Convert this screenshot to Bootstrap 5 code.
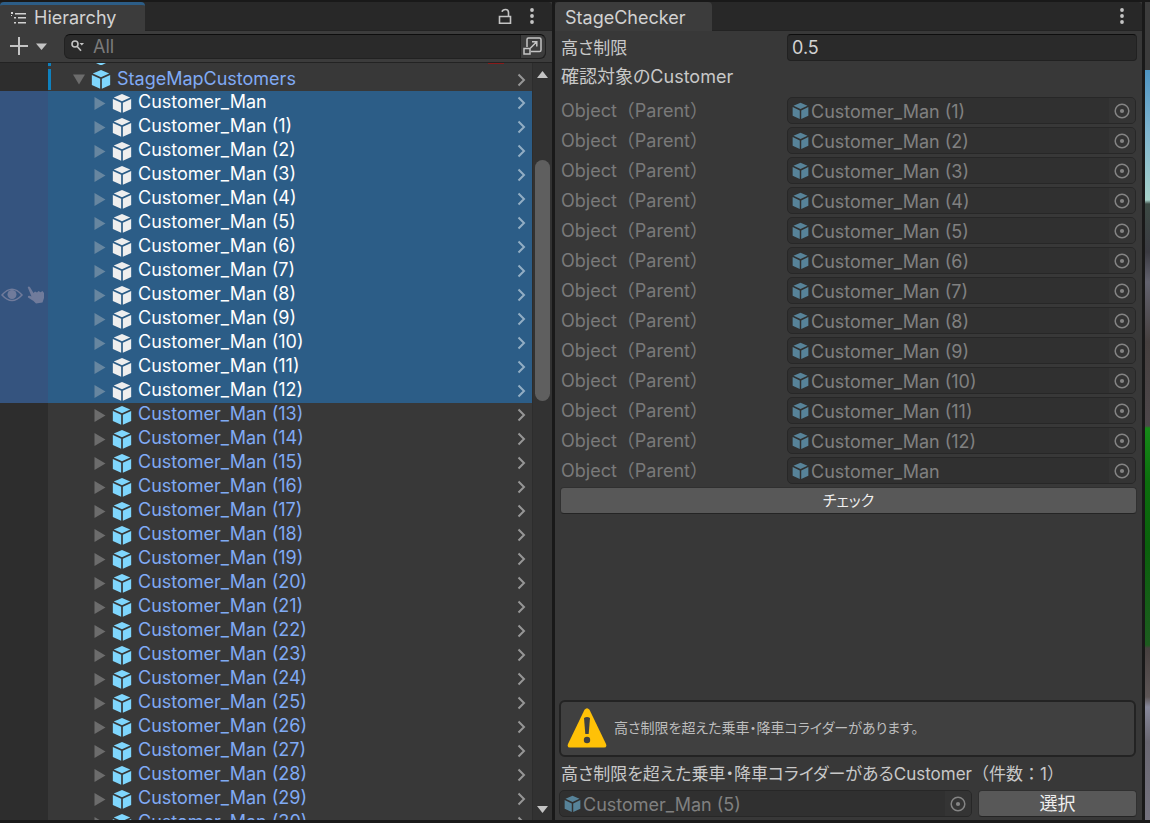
<!DOCTYPE html>
<html lang="ja">
<head>
<meta charset="utf-8">
<meta name="viewport" content="width=device-width, initial-scale=1">
<title>Hierarchy / StageChecker</title>
<link href="https://cdn.jsdelivr.net/npm/bootstrap@5.3.0/dist/css/bootstrap.min.css" rel="stylesheet">
<style>
body { background:#191919; color:#c8c8c8; font-family:Inter,"Noto Sans CJK JP",sans-serif; font-size:18px; line-height:24px; }
svg { display:block; flex:none; }
button { color:inherit; }
.kana { font-feature-settings:"palt"; }
.workspace { height:100vh; padding:2px 0 3px; gap:3px; }
.pane-hierarchy { flex:0 0 48%; min-width:0; background:#383838; }
.pane-checker { min-width:0; background:#383838; }
.tabbar { height:29px; background:#282828; border-bottom:1px solid #232323; color:#c4c4c4; border-radius:0 4px 0 0; }
.pane-tab { background:#3c3c3c; height:29px; line-height:24px; border-radius:4px 4px 0 0; color:#d2d2d2; }
.tab-active { border-top:3px solid #2c5d87; padding:1px 29px 0 11px; gap:7px; }
.tab-plain { padding:4px 27px 0 10px; }
.tabtools { gap:18px; padding-right:18px; }
.bare { background:none; border:0; padding:0; }
.toolbar { height:32px; background:#3c3c3c; border-bottom:1px solid #232323; padding:3px 6px 4px 10px; }
.searchbox { background:#2a2a2a; border:1px solid #212121; border-top-color:#0d0d0d; border-radius:6px; height:25px; margin-left:17px; padding-left:6px; }
.searchbox input { background:none; border:0; outline:0; color:#d2d2d2; padding:1px 0 0 9px; min-width:0; height:23px; }
.searchbox input::placeholder { color:#7b7b7b; opacity:1; }
.pick-scene { background:#3c3c3c; border-left:1px solid #212121; height:23px; width:25px; padding-left:2px; border-radius:0 6px 6px 0; color:#c4c4c4; }
.tree { min-height:0; }
.tree-rows { min-width:0; }
.tree-row { height:24px; color:#80aaf4; flex:none; }
.gutter { width:48px; background:#2d2d2d; padding-left:1px; gap:4px; color:#707b9b; flex:none; }
.row-body { min-width:0; padding:0 6px 0 46px; }
.row-body .twist { color:#6c6c6c; margin-right:6px; }
.row-body .cube { color:#7fd6fd; margin-right:6px; }
.row-body .go { color:#969696; }
.row-text { line-height:22px; height:24px; }
.selected { color:#fff; background:#2c5d87; }
.selected .gutter { background:#35547f; }
.selected .cube { color:#eee; }
.selected .twist { color:#6786a0; }
.selected .go { color:#92aec4; }
.root-row .row-body { margin:2px 0 1px; padding-left:22px; border-left:3px solid #0f81be; }
.clipped-row { height:4px; }
.clipped-row .row-body { height:3px; padding-left:45px; border-left:3px solid #0f81be; padding-right:28px; }
.red-mark { width:16px; height:1px; background:#8a1b1b; }
.scroller { width:20px; background:#323232; border-left:1px solid #2d2d2d; padding:8px 0 7px; color:#c4c4c4; flex:none; }
.thumb { width:15px; height:241px; border-radius:8px; background:#5f5f5f; margin-top:82px; }
.form-area { padding:3px 5px 3px 4px; }
.prop { height:30px; flex:none; }
.prop-name { width:228px; flex:none; padding:2px 0 0 2px; }
.jp-text { font-size:17px; }
.section-name { padding:1px 0 0 2px; }
.field { background:#2a2a2a; border:1px solid #212121; border-top-color:#0d0d0d; border-radius:4px; height:27px; color:#d2d2d2; padding:0 4px; min-width:0; outline:0; }
.dim { color:#7a7a7a; }
.objfield { height:27px; background:#303030; border:1px solid #272727; border-radius:5px; color:#808080; padding-left:4px; margin-right:1px; min-width:0; }
.objfield .cube { color:#578399; margin-right:2px; }
.objfield input { background:none; border:0; outline:0; padding:1px 0 0; color:inherit; min-width:0; height:25px; }
.picker { width:26px; height:25px; background:#343434; border-radius:0 4px 4px 0; color:#848484; }
.objects { padding-top:3px; }
.act { background:#585858; border:1px solid #303030; border-bottom-color:#242424; border-radius:4px; color:#eee; padding:0; height:27px; line-height:22px; }
.act-check { margin-left:1px; font-size:15px; }
.act-pick { width:159px; flex:none; }
.result { gap:5px; }
.notice { background:#404040; border:2px solid #232323; border-radius:6px; height:57px; margin-right:1px; padding:0 6px 2px; gap:7px; color:#bdbdbd; font-size:14px; }
.result-name { padding:5px 0 4px 2px; }
.scene-edge { width:5px; flex:none; background:linear-gradient(#3c3c3c 0 68px,#4e94c2 68px,#7fb5cf 130px,#a8d3cb 198px,#3c4a44 202px,#3b3b42 250px,#62626e 280px,#46403f 340px,#4d474a 424px,#168a18 426px,#0c6e0d 480px,#0a610c 545px,#1d5c1f 643px,#47403f 646px,#5d5656 695px,#87889b 705px,#696771 740px,#74727e 818px); }
</style>
</head>
<body>
<svg class="d-none" aria-hidden="true">
  <symbol id="i-cube" viewBox="0 0 20 22"><path fill="currentColor" d="M10 1 18.6 4.6 10 8.7 1.4 4.6zM.4 6.2 9.1 10.3V20.8L.4 16.7zM19.6 6.2 10.9 10.3V20.8l8.7-4.1z"/></symbol>
  <symbol id="i-go" viewBox="0 0 8 14"><path fill="none" stroke="currentColor" stroke-width="2" d="M1 1.5 6.5 7 1 12.5"/></symbol>
  <symbol id="i-right" viewBox="0 0 12 13"><path fill="currentColor" d="M.5 0v13L11.5 6.5z"/></symbol>
  <symbol id="i-down" viewBox="0 0 13 12"><path fill="currentColor" d="M0 .5h13L6.5 11.5z"/></symbol>
  <symbol id="i-dots" viewBox="0 0 4 16"><g fill="currentColor"><circle cx="2" cy="2" r="1.9"/><circle cx="2" cy="8" r="1.9"/><circle cx="2" cy="14" r="1.9"/></g></symbol>
  <symbol id="i-target" viewBox="0 0 16 16"><circle cx="8" cy="8" r="6.8" fill="none" stroke="currentColor" stroke-width="1.5"/><circle cx="8" cy="8" r="2.1" fill="currentColor"/></symbol>
</svg>

<div class="workspace d-flex">
  <section class="pane-hierarchy d-flex flex-column">
    <div class="tabbar d-flex align-items-center justify-content-between flex-shrink-0">
      <div class="pane-tab tab-active d-flex align-items-center">
        <svg width="16" height="13" viewBox="0 0 16 13" fill="currentColor"><path d="M0 0h2v2H0zM4 1h11v1.4H4zM3 5h2v1.6H3zM7 5h8v1.4H7zM3 10h2v1.6H3zM7 10h8v1.4H7zM0 3h1v1H0z"/></svg>
        <span>Hierarchy</span>
      </div>
      <div class="tabtools d-flex align-items-center">
        <button class="bare" aria-label="Lock"><svg width="14" height="17" viewBox="0 0 14 17" fill="none" stroke="currentColor" stroke-width="1.6"><path d="M1.500 8.500h11v6.700h-11zM10.500 8.500V4.500Q10.500 1.500 7.500 1.500 4.700 1.500 4 3.700"/></svg></button>
        <button class="bare" aria-label="Menu"><svg width="4" height="16"><use href="#i-dots"/></svg></button>
      </div>
    </div>
    <div class="toolbar d-flex align-items-center flex-shrink-0">
      <button class="bare d-flex align-items-center gap-2" aria-label="Create">
        <svg width="18" height="18" viewBox="0 0 18 18" stroke="#c4c4c4" stroke-width="2"><path d="M9 0v18M0 9h18"/></svg>
        <svg width="11" height="7" viewBox="0 0 11 7" fill="#c4c4c4"><path d="M0 .5h11L5.500 7z"/></svg>
      </button>
      <div class="searchbox d-flex align-items-center flex-grow-1">
        <svg width="13" height="12" viewBox="0 0 13 12" fill="none" stroke="#c4c4c4" stroke-width="1.6"><circle cx="4" cy="4" r="3"/><path d="M6 6.200 10 10.800"/><path d="M8.500 3h4.500l-2.200 2.600z" fill="#c4c4c4" stroke="none"/></svg>
        <input class="flex-grow-1" type="text" placeholder="All" aria-label="Search hierarchy">
        <button class="bare pick-scene" aria-label="Open search window"><svg width="20" height="20" viewBox="0 0 20 20" fill="none" stroke="currentColor" stroke-width="1.5"><path d="M4 11V3.500Q4 2 5.500 2h11Q18 2 18 3.500V14Q18 15.500 16.500 15.500H8M1 12.500h6v5.500H1zM7.500 12 13.500 6M9 5.700h4.800v4.800"/></svg></button>
      </div>
    </div>
    <div class="tree d-flex flex-grow-1">
      <div class="tree-rows d-flex flex-column flex-grow-1 overflow-hidden" id="tree">
        <div class="clipped-row d-flex overflow-hidden flex-shrink-0">
          <div class="gutter"></div>
          <div class="row-body d-flex flex-grow-1"><svg width="10" height="2" viewBox="0 0 10 2" fill="#7fd6fd"><path d="M0 0h10L6 2H4z"/></svg><span class="red-mark ms-auto"></span></div>
        </div>
      </div>
      <div class="scroller d-flex flex-column align-items-center">
        <svg width="11" height="7" viewBox="0 0 11 7" fill="currentColor"><path d="M0 7h11L5.500 0z"/></svg>
        <div class="thumb"></div>
        <svg class="mt-auto" width="11" height="7" viewBox="0 0 11 7" fill="currentColor"><path d="M0 0h11L5.500 7z"/></svg>
      </div>
    </div>
  </section>

  <section class="pane-checker d-flex flex-column flex-grow-1">
    <div class="tabbar d-flex align-items-center justify-content-between flex-shrink-0">
      <div class="pane-tab tab-plain">StageChecker</div>
      <div class="tabtools d-flex"><button class="bare" aria-label="Menu"><svg width="4" height="16"><use href="#i-dots"/></svg></button></div>
    </div>
    <form class="form-area d-flex flex-column flex-grow-1">
      <div class="prop d-flex">
        <label class="prop-name jp-text kana" for="limit">高さ制限</label>
        <input class="field flex-grow-1" id="limit" type="text" value="0.5">
      </div>
      <div class="prop"><span class="section-name kana d-block">確認対象のCustomer</span></div>
      <div id="objects" class="objects"></div>
      <button type="button" class="act act-check kana">チェック</button>
      <div class="notice kana d-flex align-items-center mt-auto">
        <svg width="40" height="40" viewBox="0 0 40 40"><path fill="#ffc107" d="M17.500 1.800Q20-1.500 22.500 1.800L39 36Q40.200 39.500 37 39.500H3Q-.2 39.500 1 36z"/><path fill="#404040" d="M17 10q3-2 6 0l-1.300 16h-3.400z"/><circle cx="20" cy="32" r="3.200" fill="#404040"/></svg>
        <span>高さ制限を超えた乗車・降車コライダーがあります。</span>
      </div>
      <label class="result-name jp-text" for="hit"><span class="kana">高さ制限を超えた乗車・降車コライダーがあるCustomer</span>（件数：1）</label>
      <div class="result d-flex">
        <div class="objfield d-flex align-items-center flex-grow-1">
          <svg class="cube" width="17" height="18"><use href="#i-cube"/></svg>
          <input class="flex-grow-1" id="hit" type="text" value="Customer_Man (5)" readonly>
          <button type="button" class="bare picker d-flex align-items-center justify-content-center" aria-label="Pick object"><svg width="16" height="16"><use href="#i-target"/></svg></button>
        </div>
        <button type="button" class="act act-pick">選択</button>
      </div>
    </form>
  </section>
  <div class="scene-edge"></div>
</div>

<script>
const tree = document.getElementById('tree');
const eye = '<svg width="22" height="14" viewBox="0 0 22 14"><path d="M1 7Q11-4.500 21 7 11 18 1 7z" fill="none" stroke="currentColor" stroke-width="1.500"/><circle cx="11" cy="6.500" r="4.500" fill="currentColor"/></svg>' +
  '<svg width="18" height="18" viewBox="0 0 18 18"><path fill="currentColor" d="M.7 1.200Q2-.3 3.200 1.500L6.500 7 8 5.500 10 6.500 11.500 5 13.500 6.200 15.500 5 17 7V12L15.500 16.500 9 17.500 6.500 15 1 11.500Q.5 9.500 2.500 9.800L4.500 10.500z"/></svg>';
function addRow(name, cls, twist, tools) {
  tree.insertAdjacentHTML('beforeend', `<div class="tree-row d-flex ${cls}">
    <div class="gutter d-flex align-items-center">${tools ? eye : ''}</div>
    <div class="row-body d-flex align-items-center flex-grow-1">
      <svg class="twist" width="12" height="13"><use href="#${twist}"/></svg>
      <svg class="cube" width="20" height="21"><use href="#i-cube"/></svg>
      <span class="row-text">${name}</span>
      <svg class="go ms-auto" width="9" height="14"><use href="#i-go"/></svg>
    </div></div>`);
}
const label = n => n ? `Customer_Man (${n})` : 'Customer_Man';
addRow('StageMapCustomers', 'root-row', 'i-down', false);
for (let n = 0; n <= 30; n++) addRow(label(n), n <= 12 ? 'selected' : '', 'i-right', n === 8);

const objects = document.getElementById('objects');
[1,2,3,4,5,6,7,8,9,10,11,12,0].forEach((n, i) => {
  objects.insertAdjacentHTML('beforeend', `<div class="prop d-flex">
    <label class="prop-name dim" for="obj${i}">Object（Parent）</label>
    <div class="objfield d-flex align-items-center flex-grow-1">
      <svg class="cube" width="17" height="18"><use href="#i-cube"/></svg>
      <input class="flex-grow-1" id="obj${i}" type="text" value="${label(n)}" readonly>
      <button type="button" class="bare picker d-flex align-items-center justify-content-center" aria-label="Pick object"><svg width="16" height="16"><use href="#i-target"/></svg></button>
    </div></div>`);
});
</script>
<script src="https://cdn.jsdelivr.net/npm/bootstrap@5.3.0/dist/js/bootstrap.bundle.min.js"></script>
</body>
</html>
